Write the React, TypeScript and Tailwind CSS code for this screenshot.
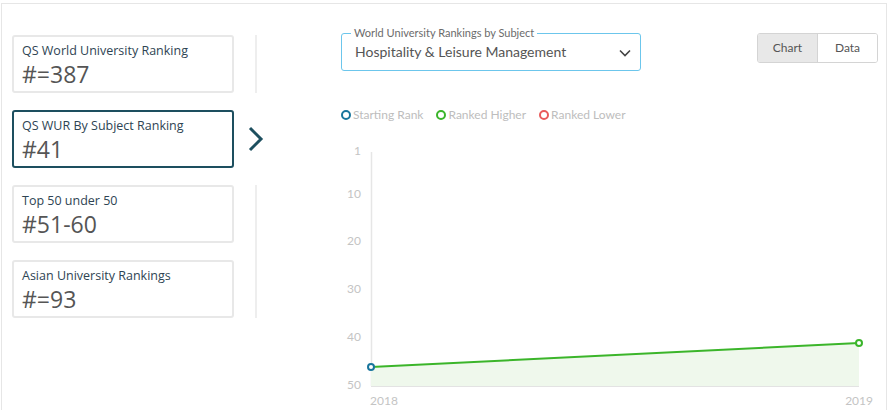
import React from 'react';

const rankings = [
  { label: 'QS World University Ranking', value: '#=387' },
  { label: 'QS WUR By Subject Ranking', value: '#41', active: true },
  { label: 'Top 50 under 50', value: '#51-60' },
  { label: 'Asian University Rankings', value: '#=93' },
];

const RankCard = ({ label, value, active }: { label: string; value: string; active?: boolean }) => (
  <div
    className={`h-[58px] w-[222px] rounded-[3px] border-2 px-[8px] pt-[6px] ${
      active ? 'border-[#1d4f5f]' : 'border-[#e8e8e8]'
    }`}
  >
    <div className="text-[12.5px] leading-[16px] text-[#2e4453]">{label}</div>
    <div className="mt-[2px] text-[23px] leading-[26px] text-[#555]">{value}</div>
  </div>
);

const LegendItem = ({ color, text }: { color: string; text: string }) => (
  <div className="flex items-center gap-[2px]">
    <span className="h-[10px] w-[10px] rounded-full border-2" style={{ borderColor: color }} />
    <span className="text-[12px] text-[#bdbdbd]">{text}</span>
  </div>
);

const Chart = () => {
  const ticks = [
    { v: '1', y: 11 },
    { v: '10', y: 54 },
    { v: '20', y: 101 },
    { v: '30', y: 149 },
    { v: '40', y: 197 },
    { v: '50', y: 245 },
  ];
  return (
    <svg width="546" height="270" className="block" style={{ fontFamily: 'Lato, "Open Sans", sans-serif' }}>
      {ticks.map((t) => (
        <text key={t.v} x="20" y={t.y + 4} textAnchor="end" fontSize="12" fill="#c4c4c4">
          {t.v}
        </text>
      ))}
      <line x1="30.5" y1="12" x2="30.5" y2="246" stroke="#e6e6e6" strokeWidth="1.5" />
      <polygon points="30,227 518,203 518,246 30,246" fill="#eff8ec" />
      <line x1="30" y1="246.5" x2="518" y2="246.5" stroke="#e3e3e3" strokeWidth="1" />
      <line x1="30" y1="227" x2="518" y2="203" stroke="#3bb52a" strokeWidth="2" />
      <circle cx="30" cy="227" r="3" fill="#fff" stroke="#18759c" strokeWidth="2" />
      <circle cx="518" cy="203" r="3" fill="#fff" stroke="#3bb52a" strokeWidth="2" />
      <text x="29" y="265" fontSize="12" fill="#c4c4c4">2018</text>
      <text x="532" y="265" textAnchor="end" fontSize="12" fill="#c4c4c4">2019</text>
    </svg>
  );
};

export default function App() {
  return (
    <div className="h-[410px] w-[891px] overflow-hidden bg-white" style={{ fontFamily: '"Open Sans", sans-serif' }}>
      <div className="ml-[1px] mt-[3px] flex h-[420px] w-[886px] border-l border-r border-t border-[#e6e6e6]">
        {/* left column */}
        <div className="flex pl-[10px] pt-[31px]">
          <div className="flex flex-col gap-[17px]">
            {rankings.map((r) => (
              <RankCard key={r.label} {...r} />
            ))}
          </div>
          <div className="ml-[14px] flex w-[16px] flex-col items-center">
            <div className="h-[58px] w-[2px] bg-[#eeeeee]" />
            <div className="mt-[16px] flex h-[59px] items-center">
              <svg width="16" height="26" viewBox="0 0 16 26">
                <path d="M2 2 L13 13 L2 24" fill="none" stroke="#1d4f5f" strokeWidth="3" />
              </svg>
            </div>
            <div className="mt-[17px] h-[133px] w-[2px] bg-[#eeeeee]" />
          </div>
        </div>

        {/* right column */}
        <div className="ml-[77px] flex flex-1 flex-col" style={{ fontFamily: 'Lato, "Open Sans", sans-serif' }}>
          <div className="mt-[29px] flex items-start justify-between pr-[9px]">
            <div className="relative flex h-[38px] w-[300px] items-center justify-between rounded-[3px] border border-[#6cc6ec] pl-[13px] pr-[9px]">
              <span className="absolute -top-[8px] left-[9px] bg-white px-[3px] text-[11px] leading-[14px] text-[#6b6b6b]">
                World University Rankings by Subject
              </span>
              <span className="-mt-[1px] text-[14px] text-[#555]">Hospitality &amp; Leisure Management</span>
              <svg width="12" height="8" viewBox="0 0 12 8" className="mt-[2px]">
                <path d="M1 1.5 L6 6.5 L11 1.5" fill="none" stroke="#444" strokeWidth="1.6" />
              </svg>
            </div>
            <div className="flex h-[30px] overflow-hidden rounded-[3px] border border-[#d4d4d4] text-[12px] text-[#555]">
              <div className="flex w-[60px] items-center justify-center border-r border-[#d4d4d4] bg-[#e8e8e8]">Chart</div>
              <div className="flex w-[59px] items-center justify-center bg-white">Data</div>
            </div>
          </div>
          <div className="mt-[35px] flex items-center gap-[13px]">
            <LegendItem color="#18759c" text="Starting Rank" />
            <LegendItem color="#3bb52a" text="Ranked Higher" />
            <LegendItem color="#e85a5a" text="Ranked Lower" />
          </div>
          <div className="mt-[16px]">
            <Chart />
          </div>
        </div>
      </div>
    </div>
  );
}
